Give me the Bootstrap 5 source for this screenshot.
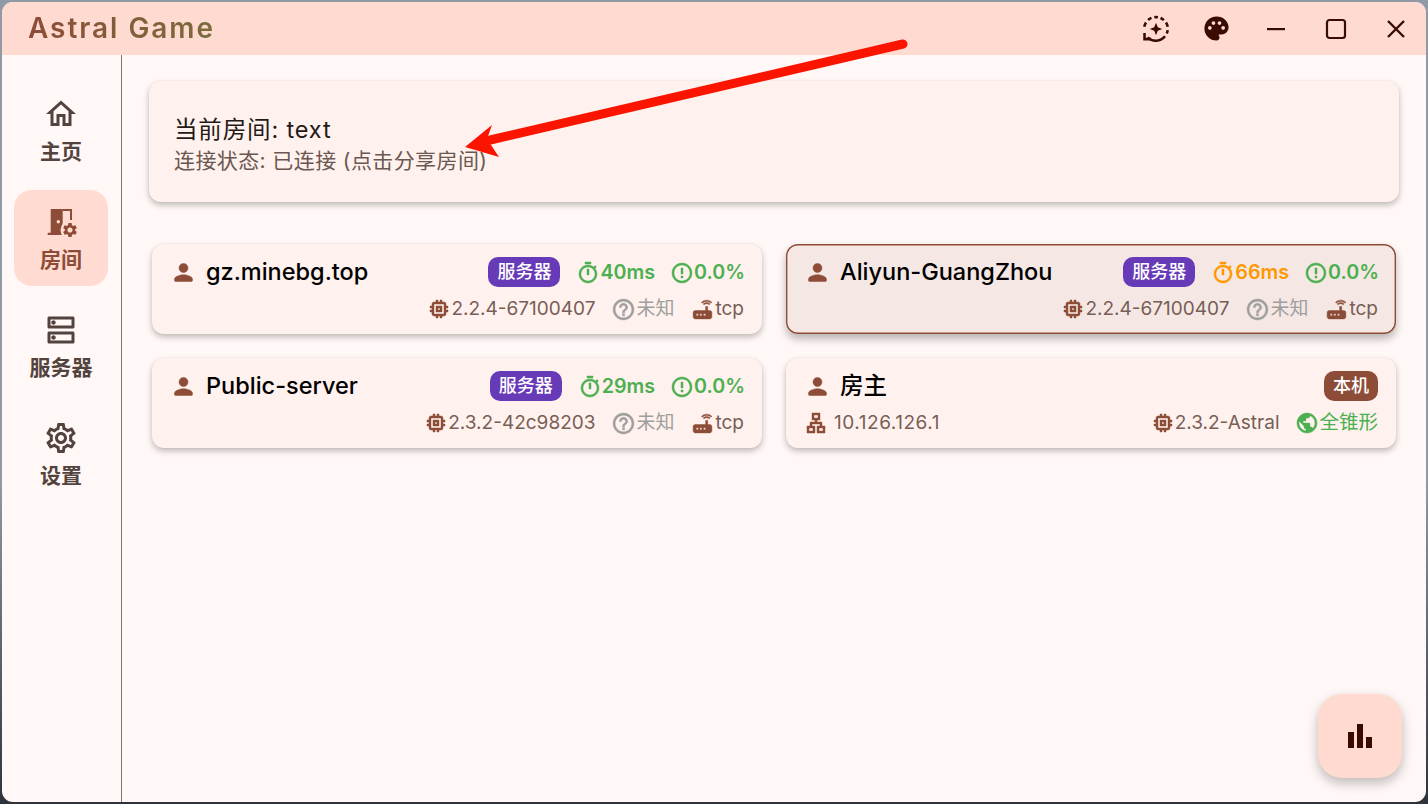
<!DOCTYPE html>
<html lang="zh">
<head>
<meta charset="utf-8">
<title>Astral Game</title>
<link rel="stylesheet" href="https://cdn.jsdelivr.net/npm/bootstrap@5.3.0/dist/css/bootstrap.min.css">
<style>
html,body{height:100%;margin:0;overflow:hidden}
body{background:linear-gradient(180deg,#8f9aa5 0%,#8f9aa5 60%,#2e333b 100%);font-family:"Inter","Noto Sans CJK SC",sans-serif;padding:2px}
.ag-win{position:relative;height:800px;width:1424px;border-radius:11px;overflow:hidden;background:#fff8f6;color:#231917}
.ag-head{height:53px;background:#ffdad1;padding:0 0 0 26px}
.ag-title{font-size:28px;font-weight:600;letter-spacing:1.95px;background:linear-gradient(90deg,#8d4c37,#7a6d3c);-webkit-background-clip:text;background-clip:text;color:transparent;line-height:53px}
.ag-hbtn{width:60px;height:53px;display:flex;align-items:center;justify-content:center;color:#3a0b01}
.ag-body{height:747px}
.ag-side{flex:none;border-right:1px solid #85736e;padding:27px 13px 0 12px;box-sizing:content-box;width:94px}
.ag-nav{height:96px;border-radius:18px;color:#53433f;font-weight:700;font-size:21px;line-height:1;margin-bottom:12px;padding-top:14px;text-decoration:none}
.ag-nav svg{display:block;margin-bottom:9px}
.ag-nav.ag-on{background:#ffdbd1;color:#8d4c37}
.ag-main{padding:26px 27px 0}
.ag-info{background:#fff1ed;border:0;border-radius:12px;height:121px;box-shadow:0 3px 6px rgba(0,0,0,.26),0 0 2px rgba(0,0,0,.06);padding:31px 25px 0;margin-bottom:42px}
.ag-info-t{font-size:23.5px;line-height:36px;color:#231917;font-weight:400;letter-spacing:.85px}
.ag-info-s{font-size:21px;line-height:26px;color:#6b5751;letter-spacing:.4px}
.ag-gridwrap{padding:0 3px}
.ag-gridwrap .row{--bs-gutter-x:24px;--bs-gutter-y:24px}
.ag-peer{background:#fff1ed;border:0;border-radius:12px;height:90px;box-shadow:0 3px 6px rgba(0,0,0,.26),0 0 2px rgba(0,0,0,.06);padding:11px 18px 0 18px}
.ag-peer.ag-sel{background:#f5e8e4;box-shadow:inset 0 0 0 1.4px #8d4c37,0 5px 9px rgba(0,0,0,.28)}
.ag-line1{height:34px;margin-right:-1px}
.ag-line2{height:34px;margin-top:3px;font-size:19px;color:#775e56;font-weight:400}
.ag-name{font-size:23.5px;font-weight:500;color:#000;margin-left:9px}
.ag-tag{font-size:18px;font-weight:500;color:#fff;padding:0 9px;height:30px;line-height:30px;border-radius:10px;margin-right:16px}
.ag-purple{background:#673ab7}
.ag-brown{background:#8d4c37;margin-right:1px}
.ag-green{color:#4caf50}
.ag-orange{color:#ff9800}
.ag-grey{color:#9e9e9e}
.ag-stat{font-size:19.7px;font-weight:600;line-height:1;padding-top:1px}
.ag-stat+.ag-stat{margin-left:15px}
.ag-meta+.ag-meta{margin-left:16px}
.ag-nat{font-size:19.5px}
.ag-ip{letter-spacing:.55px;margin-left:6px}
.ag-ic{flex:none;stroke:currentColor;stroke-width:.45px}
.ag-fab{position:absolute;right:24px;bottom:24px;width:84px;height:84px;border-radius:24px;background:#ffdad1;color:#3a0b01;box-shadow:0 5px 12px rgba(0,0,0,.26)}
.ag-arrow{position:absolute;left:-2px;top:-2px;pointer-events:none}
</style>
</head>
<body>
<svg width="0" height="0" class="position-absolute">
<defs>
<symbol id="i-person" viewBox="0 0 24 24"><path d="M12 12c2.21 0 4-1.79 4-4s-1.79-4-4-4-4 1.79-4 4 1.79 4 4 4zm0 2c-2.67 0-8 1.34-8 4v1c0 .55.45 1 1 1h14c.55 0 1-.45 1-1v-1c0-2.66-5.33-4-8-4z" fill="currentColor"/></symbol>
<symbol id="i-chip" viewBox="0 0 24 24"><path d="M15 9H9v6h6V9zm-2 4h-2v-2h2v2zm8-2V9h-2V7c0-1.1-.9-2-2-2h-2V3h-2v2h-2V3H9v2H7c-1.1 0-2 .9-2 2v2H3v2h2v2H3v2h2v2c0 1.1.9 2 2 2h2v2h2v-2h2v2h2v-2h2c1.1 0 2-.9 2-2v-2h2v-2h-2v-2h2zm-4 6H7V7h10v10z" fill="currentColor"/></symbol>
<symbol id="i-timer" viewBox="0 0 24 24"><path d="M15 1H9v2h6V1zm-4 13h2V8h-2v6zm8.03-6.61l1.42-1.42c-.43-.51-.9-.99-1.41-1.41l-1.42 1.42C16.07 4.74 14.12 4 12 4c-4.97 0-9 4.03-9 9s4.02 9 9 9 9-4.03 9-9c0-2.12-.74-4.07-1.97-5.61zM12 20c-3.87 0-7-3.13-7-7s3.13-7 7-7 7 3.13 7 7-3.13 7-7 7z" fill="currentColor"/></symbol>
<symbol id="i-err" viewBox="0 0 24 24"><path d="M11 15h2v2h-2zm0-8h2v6h-2zm.99-5C6.47 2 2 6.48 2 12s4.47 10 9.99 10C17.52 22 22 17.52 22 12S17.52 2 11.99 2zM12 20c-4.42 0-8-3.58-8-8s3.58-8 8-8 8 3.58 8 8-3.58 8-8 8z" fill="currentColor"/></symbol>
<symbol id="i-help" viewBox="0 0 24 24"><path d="M11 18h2v-2h-2v2zm1-16C6.48 2 2 6.48 2 12s4.48 10 10 10 10-4.48 10-10S17.52 2 12 2zm0 18c-4.41 0-8-3.59-8-8s3.59-8 8-8 8 3.59 8 8-3.59 8-8 8zm0-14c-2.21 0-4 1.79-4 4h2c0-1.1.9-2 2-2s2 .9 2 2c0 2-3 1.75-3 5h2c0-2.25 3-2.5 3-5 0-2.21-1.79-4-4-4z" fill="currentColor"/></symbol>
<symbol id="i-router" viewBox="0 0 24 24"><path d="M20.2 5.9l.8-.8C19.6 3.7 17.8 3 16 3s-3.6.7-5 2.1l.8.8C13 4.8 14.5 4.2 16 4.2s3 .6 4.2 1.7zm-.9.8c-.9-.9-2.1-1.4-3.3-1.4s-2.4.5-3.3 1.4l.8.8c.7-.7 1.6-1 2.5-1 .9 0 1.8.3 2.5 1l.8-.8zM19 13h-2V9h-2v4H5c-1.1 0-2 .9-2 2v4c0 1.1.9 2 2 2h14c1.1 0 2-.9 2-2v-4c0-1.1-.9-2-2-2zM8 18H6v-2h2v2zm3.5 0h-2v-2h2v2zm3.5 0h-2v-2h2v2z" fill="currentColor"/></symbol>
</defs>
</svg>
<div class="ag-win d-flex flex-column">
  <header class="ag-head d-flex align-items-center justify-content-between">
    <div class="ag-title">Astral Game</div>
    <div class="d-flex">
      <div class="ag-hbtn"><svg width="36" height="36" viewBox="0 0 32 32" fill="none" stroke="currentColor" stroke-width="2.3"><path d="M5.6 14a10.5 10.5 0 0 1 1.5-3.8M9 8a10.5 10.5 0 0 1 3-1.900M14.5 5.600a10.500 10.500 0 0 1 3.200 0M20 6.200a10.500 10.500 0 0 1 3 1.900M24.900 10.200a10.500 10.500 0 0 1 1.500 3.800M26.400 17a10.500 10.500 0 0 1-.9 3M24 22.500A10.500 10.500 0 0 1 8.500 23.500"/><path d="M5.800 19.500v5.500h5.700"/><path d="M16 10.500l1.600 3.900 3.900 1.600-3.900 1.600-1.600 3.900-1.600-3.900-3.900-1.600 3.900-1.600z" fill="currentColor" stroke="none"/></svg></div>
      <div class="ag-hbtn"><svg width="29" height="29" viewBox="0 0 24 24"><path fill="currentColor" d="M12 2C6.49 2 2 6.49 2 12s4.49 10 10 10c1.38 0 2.5-1.12 2.5-2.5 0-.61-.23-1.2-.64-1.67-.08-.1-.13-.21-.13-.33 0-.28.22-.5.5-.5H16c3.31 0 6-2.69 6-6 0-4.96-4.49-9-10-9zm5.5 11c-.83 0-1.5-.67-1.5-1.5s.67-1.5 1.5-1.5 1.5.67 1.5 1.5-.67 1.5-1.5 1.5zm-3-4c-.83 0-1.5-.67-1.5-1.5S13.67 6 14.5 6s1.5.67 1.5 1.5S15.33 9 14.5 9zM5 11.5c0-.83.67-1.5 1.5-1.5s1.5.67 1.5 1.5S7.33 13 6.5 13 5 12.33 5 11.5zm6-4c0 .83-.67 1.5-1.5 1.5S8 8.33 8 7.5 8.67 6 9.5 6s1.5.67 1.5 1.5z"/></svg></div>
      <div class="ag-hbtn"><svg width="20" height="20" viewBox="0 0 20 20"><rect x="1" y="9" width="18" height="2.2" fill="currentColor"/></svg></div>
      <div class="ag-hbtn"><svg width="22" height="22" viewBox="0 0 22 22" fill="none" stroke="currentColor" stroke-width="2.2"><rect x="2" y="2" width="18" height="18" rx="2.5"/></svg></div>
      <div class="ag-hbtn"><svg width="20" height="20" viewBox="0 0 20 20" fill="none" stroke="currentColor" stroke-width="2.4"><path d="M2 2l16 16M18 2L2 18"/></svg></div>
    </div>
  </header>
  <div class="ag-body d-flex">
    <nav class="ag-side d-flex flex-column">
      <a class="ag-nav d-flex flex-column align-items-center"><svg width="36" height="36" viewBox="0 0 24 24"><path fill="currentColor" fill-rule="evenodd" d="M12 5.69l5 4.5V18h-2v-6H9v6H7v-7.81l5-4.5M12 3L2 12h3v8h6v-6h2v6h6v-8h3L12 3z"/></svg>主页</a>
      <a class="ag-nav ag-on d-flex flex-column align-items-center"><svg width="36" height="36" viewBox="0 0 36 36"><path fill="currentColor" fill-rule="evenodd" d="M7.7 5h12v26h-15v-2.2h3zM15.3 16a1.7 1.7 0 1 0 .01 0z"/><path fill="currentColor" d="M19.7 5H29v11h-2V7h-7.300z"/><circle cx="27" cy="26" r="9.500" fill="#ffdbd1"/><path transform="translate(18.36 17.36) scale(.72)" fill="currentColor" d="M19.14 12.94c.04-.3.06-.61.06-.94 0-.32-.02-.64-.07-.94l2.03-1.58c.18-.14.23-.41.12-.61l-1.920-3.320c-.12-.22-.37-.29-.59-.22l-2.390.96c-.5-.38-1.030-.7-1.620-.94l-.36-2.540c-.04-.24-.24-.41-.48-.41h-3.840c-.24 0-.43.17-.47.41l-.36 2.540c-.59.24-1.130.57-1.620.94l-2.390-.96c-.22-.08-.47 0-.59.22L2.740 8.870c-.12.21-.08.47.12.61l2.030 1.580c-.05.3-.09.63-.09.94s.02.64.07.94l-2.030 1.580c-.18.14-.23.41-.12.61l1.920 3.320c.12.22.37.29.59.22l2.390-.96c.5.38 1.030.7 1.620.94l.36 2.540c.05.24.24.41.48.41h3.840c.24 0 .44-.17.47-.41l.36-2.540c.59-.24 1.130-.56 1.620-.94l2.390.96c.22.08.47 0 .59-.22l1.920-3.320c.12-.22.07-.47-.12-.61l-2.010-1.580zM12 15.600c-1.980 0-3.600-1.620-3.600-3.600s1.620-3.600 3.600-3.600 3.600 1.620 3.600 3.600-1.620 3.600-3.600 3.600z"/></svg>房间</a>
      <a class="ag-nav d-flex flex-column align-items-center"><svg width="36" height="36" viewBox="0 0 24 24"><path fill="currentColor" d="M19 15v4H5v-4h14m1-2H4c-.55 0-1 .45-1 1v6c0 .55.45 1 1 1h16c.55 0 1-.45 1-1v-6c0-.55-.45-1-1-1zM7 18.5c-.82 0-1.5-.67-1.5-1.5s.68-1.5 1.5-1.5 1.5.67 1.5 1.5-.67 1.5-1.5 1.5zM19 5v4H5V5h14m1-2H4c-.55 0-1 .45-1 1v6c0 .55.45 1 1 1h16c.55 0 1-.45 1-1V4c0-.55-.45-1-1-1zM7 8.5c-.82 0-1.5-.67-1.5-1.5S6.18 5.5 7 5.5s1.5.68 1.5 1.5S7.83 8.5 7 8.5z"/></svg>服务器</a>
      <a class="ag-nav d-flex flex-column align-items-center"><svg width="36" height="36" viewBox="0 0 24 24"><path fill="currentColor" d="M19.43 12.98c.04-.32.07-.64.07-.98 0-.34-.03-.66-.07-.98l2.11-1.65c.19-.15.24-.42.12-.64l-2-3.46c-.09-.16-.26-.25-.44-.25-.06 0-.12.01-.17.03l-2.49 1c-.52-.4-1.08-.73-1.69-.98l-.38-2.65C14.46 2.18 14.25 2 14 2h-4c-.25 0-.46.18-.49.42l-.38 2.65c-.61.25-1.17.59-1.69.98l-2.49-1c-.06-.02-.12-.03-.18-.03-.17 0-.34.09-.43.25l-2 3.46c-.13.22-.07.49.12.64l2.11 1.65c-.04.32-.07.65-.07.98 0 .33.03.66.07.98l-2.11 1.65c-.19.15-.24.42-.12.64l2 3.46c.09.16.26.25.44.25.06 0 .12-.01.17-.03l2.49-1c.52.4 1.08.73 1.69.98l.38 2.65c.03.24.24.42.49.42h4c.25 0 .46-.18.49-.42l.38-2.65c.61-.25 1.17-.59 1.69-.98l2.49 1c.06.02.12.03.18.03.17 0 .34-.09.43-.25l2-3.46c.12-.22.07-.49-.12-.64l-2.11-1.65zm-1.98-1.71c.04.31.05.52.05.73 0 .21-.02.43-.05.73l-.14 1.13.89.7 1.08.84-.7 1.21-1.27-.51-1.04-.42-.9.68c-.43.32-.84.56-1.25.73l-1.06.43-.16 1.13-.2 1.35h-1.4l-.19-1.35-.16-1.13-1.06-.43c-.43-.18-.83-.41-1.23-.71l-.91-.7-1.06.43-1.27.51-.7-1.21 1.08-.84.89-.7-.14-1.13c-.03-.31-.05-.54-.05-.74s.02-.43.05-.73l.14-1.13-.89-.7-1.08-.84.7-1.21 1.27.51 1.04.42.9-.68c.43-.32.84-.56 1.25-.73l1.06-.43.16-1.13.2-1.35h1.39l.19 1.35.16 1.13 1.06.43c.43.18.83.41 1.23.71l.91.7 1.06-.43 1.27-.51.7 1.21-1.07.85-.89.7.14 1.13zM12 8c-2.21 0-4 1.79-4 4s1.79 4 4 4 4-1.79 4-4-1.79-4-4-4zm0 6c-1.1 0-2-.9-2-2s.9-2 2-2 2 .9 2 2-.9 2-2 2z"/></svg>设置</a>
    </nav>
    <main class="ag-main flex-grow-1">
      <section class="card ag-info">
        <div class="ag-info-t">当前房间: text</div>
        <div class="ag-info-s">连接状态: 已连接 (点击分享房间)</div>
      </section>
      <div class="ag-gridwrap">
        <div class="row">
          <div class="col-6">
            <div class="card ag-peer">
              <div class="ag-line1 d-flex align-items-center">
                <svg class="ag-ic" width="27" height="27" style="color:#8d4c37"><use href="#i-person"/></svg>
                <span class="ag-name">gz.minebg.top</span>
                <span class="ms-auto ag-tag ag-purple">服务器</span>
                <span class="ag-stat ag-green d-flex align-items-center"><svg class="ag-ic" width="24" height="24"><use href="#i-timer"/></svg>40ms</span>
                <span class="ag-stat ag-green d-flex align-items-center"><svg class="ag-ic" width="24" height="24"><use href="#i-err"/></svg>0.0%</span>
              </div>
              <div class="ag-line2 d-flex align-items-center justify-content-end">
                <span class="ag-meta d-flex align-items-center"><svg class="ag-ic" width="24" height="24" style="color:#8d4c37"><use href="#i-chip"/></svg>2.2.4-67100407</span>
                <span class="ag-meta ag-grey d-flex align-items-center"><svg class="ag-ic" width="25" height="25"><use href="#i-help"/></svg>未知</span>
                <span class="ag-meta d-flex align-items-center"><svg class="ag-ic" width="25" height="25" style="color:#8d4c37"><use href="#i-router"/></svg>tcp</span>
              </div>
            </div>
          </div>
          <div class="col-6">
            <div class="card ag-peer ag-sel">
              <div class="ag-line1 d-flex align-items-center">
                <svg class="ag-ic" width="27" height="27" style="color:#8d4c37"><use href="#i-person"/></svg>
                <span class="ag-name">Aliyun-GuangZhou</span>
                <span class="ms-auto ag-tag ag-purple">服务器</span>
                <span class="ag-stat ag-orange d-flex align-items-center"><svg class="ag-ic" width="24" height="24"><use href="#i-timer"/></svg>66ms</span>
                <span class="ag-stat ag-green d-flex align-items-center"><svg class="ag-ic" width="24" height="24"><use href="#i-err"/></svg>0.0%</span>
              </div>
              <div class="ag-line2 d-flex align-items-center justify-content-end">
                <span class="ag-meta d-flex align-items-center"><svg class="ag-ic" width="24" height="24" style="color:#8d4c37"><use href="#i-chip"/></svg>2.2.4-67100407</span>
                <span class="ag-meta ag-grey d-flex align-items-center"><svg class="ag-ic" width="25" height="25"><use href="#i-help"/></svg>未知</span>
                <span class="ag-meta d-flex align-items-center"><svg class="ag-ic" width="25" height="25" style="color:#8d4c37"><use href="#i-router"/></svg>tcp</span>
              </div>
            </div>
          </div>
          <div class="col-6">
            <div class="card ag-peer">
              <div class="ag-line1 d-flex align-items-center">
                <svg class="ag-ic" width="27" height="27" style="color:#8d4c37"><use href="#i-person"/></svg>
                <span class="ag-name">Public-server</span>
                <span class="ms-auto ag-tag ag-purple">服务器</span>
                <span class="ag-stat ag-green d-flex align-items-center"><svg class="ag-ic" width="24" height="24"><use href="#i-timer"/></svg>29ms</span>
                <span class="ag-stat ag-green d-flex align-items-center"><svg class="ag-ic" width="24" height="24"><use href="#i-err"/></svg>0.0%</span>
              </div>
              <div class="ag-line2 d-flex align-items-center justify-content-end">
                <span class="ag-meta d-flex align-items-center"><svg class="ag-ic" width="24" height="24" style="color:#8d4c37"><use href="#i-chip"/></svg>2.3.2-42c98203</span>
                <span class="ag-meta ag-grey d-flex align-items-center"><svg class="ag-ic" width="25" height="25"><use href="#i-help"/></svg>未知</span>
                <span class="ag-meta d-flex align-items-center"><svg class="ag-ic" width="25" height="25" style="color:#8d4c37"><use href="#i-router"/></svg>tcp</span>
              </div>
            </div>
          </div>
          <div class="col-6">
            <div class="card ag-peer">
              <div class="ag-line1 d-flex align-items-center">
                <svg class="ag-ic" width="27" height="27" style="color:#8d4c37"><use href="#i-person"/></svg>
                <span class="ag-name">房主</span>
                <span class="ms-auto ag-tag ag-brown">本机</span>
              </div>
              <div class="ag-line2 d-flex align-items-center">
                <svg class="ag-ic" width="24" height="24" viewBox="0 0 24 24" style="color:#8d4c37"><path fill="currentColor" d="M13 22h8v-7h-3v-4h-5V9h3V2H8v7h3v2H6v4H3v7h8v-7H8v-2h8v2h-3v7zM10 7V4h4v3h-4zM9 17v3H5v-3h4zm10 0v3h-4v-3h4z"/></svg>
                <span class="ag-ip">10.126.126.1</span>
                <span class="ag-meta ms-auto d-flex align-items-center"><svg class="ag-ic" width="24" height="24" style="color:#8d4c37"><use href="#i-chip"/></svg>2.3.2-Astral</span>
                <span class="ag-meta ag-nat ag-green d-flex align-items-center"><svg class="ag-ic" width="24" height="24" viewBox="0 0 24 24"><path fill="currentColor" d="M12 2C6.48 2 2 6.48 2 12s4.48 10 10 10 10-4.48 10-10S17.52 2 12 2zm-1 17.93c-3.95-.49-7-3.85-7-7.93 0-.62.08-1.21.21-1.79L9 15v1c0 1.1.9 2 2 2v1.93zm6.9-2.54c-.26-.81-1-1.39-1.9-1.39h-1v-3c0-.55-.45-1-1-1H8v-2h2c.55 0 1-.45 1-1V7h2c1.1 0 2-.9 2-2v-.41c2.93 1.19 5 4.06 5 7.41 0 2.08-.8 3.97-2.1 5.39z"/></svg>全锥形</span>
              </div>
            </div>
          </div>
        </div>
      </div>
    </main>
  </div>
  <div class="ag-fab d-flex align-items-center justify-content-center"><svg width="36" height="36" viewBox="0 0 36 36" fill="currentColor"><rect x="6" y="14" width="6" height="16"/><rect x="15" y="6" width="6" height="24"/><rect x="24" y="19" width="6" height="11"/></svg></div>
  <svg class="ag-arrow" width="1428" height="804" viewBox="0 0 1428 804"><path d="M903 44L486 141" stroke="#fb1500" stroke-width="9" stroke-linecap="round" fill="none"/><path d="M465 147L492 125L487 139L499 157z" fill="#fb1500"/></svg>
</div>
</body>
</html>
